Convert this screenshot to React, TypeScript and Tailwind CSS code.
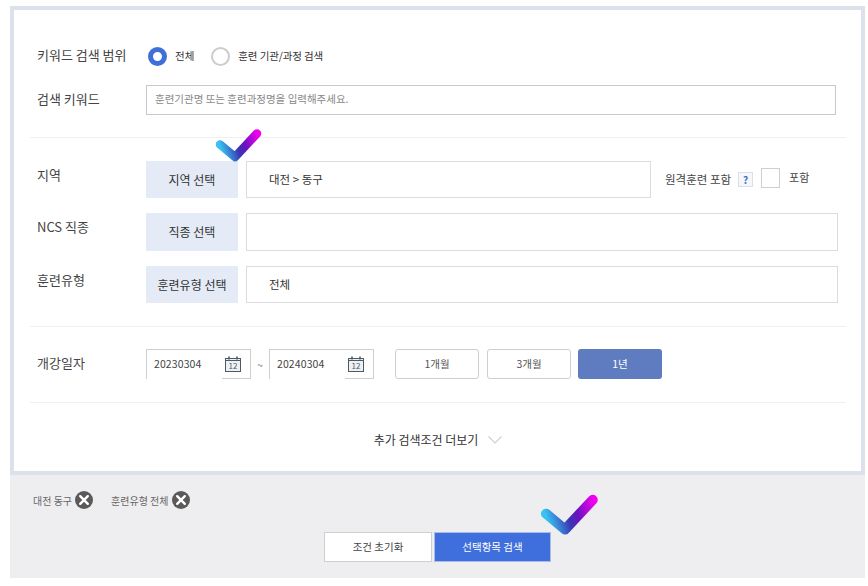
import React from 'react';

const CheckMark = ({ id, className, width }: { id: string; className: string; width: number }) => (
  <svg viewBox="0 0 46 33" className={className} fill="none">
    <defs>
      <linearGradient id={id} gradientUnits="userSpaceOnUse" x1="3" y1="15" x2="41" y2="3">
        <stop offset="0" stopColor="#38c4f2" />
        <stop offset="0.42" stopColor="#3a35b2" />
        <stop offset="0.62" stopColor="#6a12c0" />
        <stop offset="1" stopColor="#f200ee" />
      </linearGradient>
    </defs>
    <path d="M4 15.5 L19 28 L41 4.5" stroke={`url(#${id})`} strokeWidth={width} strokeLinecap="round" strokeLinejoin="round" />
  </svg>
);

const CalendarIcon = () => (
  <svg viewBox="0 0 16 16" className="w-4 h-4 text-[#4d5a66]" fill="none" stroke="currentColor">
    <rect x="0.5" y="2.5" width="15" height="13" fill="#eef1f3" />
    <path d="M0.5 4.5h15" />
    <path d="M4 0.5v3M12 0.5v3" strokeWidth="1.6" />
    <text x="8" y="13.2" textAnchor="middle" fontSize="8" fill="currentColor" stroke="none">12</text>
  </svg>
);

const CloseDot = () => (
  <svg viewBox="0 0 18 18" className="w-[18px] h-[18px] shrink-0">
    <circle cx="9" cy="9" r="9" fill="#5a5a5a" />
    <path d="M5.2 5.2 L12.8 12.8 M12.8 5.2 L5.2 12.8" stroke="#fff" strokeWidth="2.4" strokeLinecap="round" />
  </svg>
);

const DateInput = ({ value }: { value: string }) => (
  <div className="flex h-[30px] w-[105px]">
    <div className="w-[76px] border-l border-t border-[#cfcfcf] pl-[7px] pb-[2px] flex items-center text-[10.5px] tracking-[0.1px] text-[#444]">
      {value}
    </div>
    <div className="flex-1 border-t border-r border-b border-[#cfcfcf] pl-[3px] flex items-center">
      <CalendarIcon />
    </div>
  </div>
);

const App: React.FC = () => {
  return (
    <div className="relative min-h-[586px] bg-white pt-[6px] pl-[10px] font-['Noto_Sans_CJK_KR','Noto_Sans',sans-serif] text-[#333]">
      <div className="w-[855px]">
        {/* Search form */}
        <div className="border-4 border-[#dce1ec] bg-white h-[469px] pl-[16px] pr-[15px]">
          <div className="pt-[36px] pb-[22px] px-[7px] border-b border-[#f0f0f0]">
            <div className="flex items-center h-[20px]">
              <div className="w-[109px] pb-[3px] text-[13px] text-[#444]">키워드 검색 범위</div>
              <div className="w-[19px] h-[19px] rounded-full border-[5px] border-[#3f70d9] ml-[2px]" />
              <span className="ml-[8px] text-[10.5px]">전체</span>
              <div className="w-[19px] h-[19px] rounded-full border-2 border-[#cccccc] ml-[17px]" />
              <span className="ml-[8px] text-[10.5px] tracking-[-0.12px]">훈련 기관/과정 검색</span>
            </div>
            <div className="flex items-center mt-[19px]">
              <div className="w-[109px] pb-[2px] text-[13px] text-[#444]">검색 키워드</div>
              <div className="w-[690px] h-[30px] border border-[#c9c9c9] pl-[8px] pb-[2px] flex items-center text-[10.5px] text-[#888]">
                훈련기관명 또는 훈련과정명을 입력해주세요.
              </div>
            </div>
          </div>

          <div className="pt-[23px] pb-[23px] px-[7px] border-b border-[#f0f0f0]">
            <div className="flex items-center h-[37px]">
              <div className="w-[109px] pb-[10px] text-[13px] text-[#444]">지역</div>
              <div className="w-[92px] h-full bg-[#e4ebf6] flex items-center justify-center text-[12px]">지역 선택</div>
              <div className="ml-[8px] w-[405px] h-full border border-[#dcdcdc] pl-[22px] flex items-center text-[11.5px]">대전 &gt; 동구</div>
              <span className="ml-[14px] text-[11.5px] text-[#444]">원격훈련 포함</span>
              <span className="ml-[7px] w-[15px] h-[15px] border border-[#d8deea] bg-[#f5f7fb] flex items-center justify-center text-[10px] font-bold text-[#4a6fc0]">?</span>
              <div className="ml-[8px] mb-[3px] w-[19px] h-[20px] border border-[#cfcfcf]" />
              <span className="ml-[9px] mb-[5px] text-[11px] text-[#444]">포함</span>
            </div>
            <div className="flex items-center h-[38px] mt-[15px]">
              <div className="w-[109px] pb-[10px] text-[13px] text-[#444]">NCS 직종</div>
              <div className="w-[92px] h-full bg-[#e4ebf6] flex items-center justify-center text-[12px]">직종 선택</div>
              <div className="ml-[8px] w-[592px] h-full border border-[#dcdcdc]" />
            </div>
            <div className="flex items-center h-[37px] mt-[15px]">
              <div className="w-[109px] pb-[10px] text-[13px] text-[#444]">훈련유형</div>
              <div className="w-[92px] h-full bg-[#e4ebf6] flex items-center justify-center text-[12px]">훈련유형 선택</div>
              <div className="ml-[8px] w-[592px] h-full border border-[#dcdcdc] pl-[22px] flex items-center text-[11.5px]">전체</div>
            </div>
          </div>

          <div className="pt-[22px] pb-[23px] px-[7px] border-b border-[#f0f0f0]">
            <div className="flex items-center h-[30px]">
              <div className="w-[109px] pb-[2px] text-[13px] text-[#444]">개강일자</div>
              <DateInput value="20230304" />
              <span className="w-[18px] text-center text-[10px] text-[#777]">~</span>
              <DateInput value="20240304" />
              <button className="ml-[21px] w-[84px] h-full rounded-[3px] border border-[#cfcfcf] bg-white text-[10.5px] text-[#555]">1개월</button>
              <button className="ml-[8px] w-[84px] h-full rounded-[3px] border border-[#cfcfcf] bg-white text-[10.5px] text-[#555]">3개월</button>
              <button className="ml-[7px] w-[84px] h-full rounded-[3px] bg-[#5f7cc0] text-[10.5px] text-white">1년</button>
            </div>
          </div>

          <div className="flex items-center justify-center h-[68px] pt-[6px] gap-[10px] text-[12px] text-[#333]">
            <span>추가 검색조건 더보기</span>
            <svg viewBox="0 0 14 8" className="w-[14px] h-[8px]" fill="none">
              <path d="M0.5 0.5 L7 7 L13.5 0.5" stroke="#cfcfcf" strokeWidth="1.1" />
            </svg>
          </div>
        </div>

        {/* Selected conditions */}
        <div className="bg-[#eeeef1] h-[103px] pt-[16px]">
          <div className="flex items-center pl-[23px] h-[18px] gap-[18px] text-[10px] text-[#666]">
            <div className="flex items-center gap-[3px]">
              <span>대전 동구</span>
              <CloseDot />
            </div>
            <div className="flex items-center gap-[3px]">
              <span>훈련유형 전체</span>
              <CloseDot />
            </div>
          </div>
          <div className="flex justify-center gap-[2px] mt-[23px]">
            <button className="w-[108px] h-[30px] border border-[#cfcfcf] bg-white text-[10.5px] text-[#444]">조건 초기화</button>
            <button className="w-[117px] h-[30px] border border-[#a9bbe6] bg-[#3f6fdc] text-[10.5px] text-white">선택항목 검색</button>
          </div>
        </div>
      </div>

      {/* Check marks drawn over the page */}
      <CheckMark id="check-a" width={8.5} className="absolute left-[216px] top-[129px] w-[46px] h-[33px]" />
      <CheckMark id="check-b" width={8} className="absolute left-[541px] top-[494px] w-[58px] h-[42px]" />
    </div>
  );
};

export default App;
